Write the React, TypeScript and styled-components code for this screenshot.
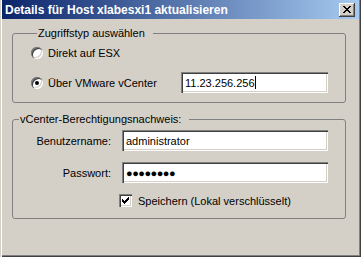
import React from 'react'
import styled, { createGlobalStyle } from 'styled-components'

const Global = createGlobalStyle`
    html, body {
        margin: 0;
        padding: 0;
        background: #d4d0c8;
    }
    * {
        box-sizing: border-box;
    }
`

const face = '#d4d0c8'
const shadow = '#808080'
const darkShadow = '#404040'
const font = `'Liberation Sans', Arial, sans-serif`

const Window = styled.div`
    width: 361px;
    height: 257px;
    background: ${face};
    font-family: ${font};
    font-size: 11px;
    color: #000;
    display: flex;
    flex-direction: column;
    box-shadow: inset 1px 0 ${face}, inset 2px 0 #fff, inset -1px -1px ${darkShadow}, inset -2px -2px ${shadow};
    padding: 0 2px 2px 2px;
`

const TitleBar = styled.div`
    height: 19px;
    display: flex;
    align-items: center;
    justify-content: space-between;
    padding: 0 4px 0 3px;
    background: linear-gradient(to right, #0a246a, #a6caf0);
`

const TitleText = styled.span`
    color: #fff;
    font-weight: bold;
    font-size: 12px;
    white-space: nowrap;
`

const CloseButton = styled.div`
    width: 16px;
    height: 14px;
    background: ${face};
    display: flex;
    align-items: center;
    justify-content: center;
    box-shadow: inset -1px -1px ${darkShadow}, inset 1px 1px #fff, inset -2px -2px ${shadow};
`

const Body = styled.div`
    display: flex;
    flex-direction: column;
    gap: 10px;
    padding: 8px 13px 0 10px;
`

const Group = styled.fieldset<{ $top: number; $bottom: number; $left: number }>`
    margin: 0;
    border: 1px solid ${shadow};
    border-radius: 3px;
    padding: ${p => p.$top}px 0 ${p => p.$bottom}px ${p => p.$left}px;
    min-width: 0;
`

const Legend = styled.legend`
    padding: 0 8px 0 1px;
    margin-left: 6px;
    line-height: 13px;
    font-size: 11px;
`

const RadioList = styled.div`
    display: flex;
    flex-direction: column;
    gap: 11px;
`

const RadioRow = styled.div`
    display: flex;
    align-items: center;
    height: 16px;
`

const RadioRowWithField = styled(RadioRow)`
    height: 21px;
`

const RadioCircle = styled.span<{ $checked?: boolean }>`
    position: relative;
    width: 12px;
    height: 12px;
    border-radius: 50%;
    background: #fff;
    flex: none;
    box-shadow: inset 1px 1px ${shadow}, inset 2px 2px ${darkShadow}, inset -1px -1px #fff, inset -2px -2px ${face};
    margin-right: 5px;
    &::after {
        content: '';
        display: ${p => (p.$checked ? 'block' : 'none')};
        position: absolute;
        left: 4px;
        top: 4px;
        width: 4px;
        height: 4px;
        border-radius: 50%;
        background: #000;
    }
`

const RadioLabel = styled.span`
    white-space: nowrap;
`

const Field = styled.div<{ $width: number }>`
    width: ${p => p.$width}px;
    height: 21px;
    background: #fff;
    display: flex;
    align-items: center;
    padding: 0 4px;
    box-shadow: inset 1px 1px ${shadow}, inset 2px 2px ${darkShadow}, inset -1px -1px #fff, inset -2px -2px ${face};
    white-space: nowrap;
    overflow: hidden;
`

const IpField = styled(Field)`
    margin-left: auto;
    margin-right: 17px;
`

const Caret = styled.span`
    display: inline-block;
    width: 1px;
    height: 13px;
    background: #000;
`

const Dots = styled.span`
    font-size: 11px;
    letter-spacing: -0.5px;
`

const Credentials = styled.div`
    display: grid;
    grid-template-columns: 98px 206px;
    column-gap: 11px;
    row-gap: 11px;
    align-items: center;
`

const FieldLabel = styled.span`
    text-align: right;
`

const CheckRow = styled.div`
    grid-column: 2;
    display: flex;
    align-items: center;
    height: 13px;
    margin-left: -3px;
`

const CheckBox = styled.span`
    width: 13px;
    height: 13px;
    background: #fff;
    flex: none;
    display: flex;
    align-items: center;
    justify-content: center;
    box-shadow: inset 1px 1px ${shadow}, inset 2px 2px ${darkShadow}, inset -1px -1px #fff, inset -2px -2px ${face};
    margin-right: 6px;
`

export default function App() {
    return (
        <>
            <Global />
            <Window>
                <TitleBar>
                    <TitleText>Details für Host xlabesxi1 aktualisieren</TitleText>
                    <CloseButton>
                        <svg width="8" height="7" viewBox="0 0 8 7" shapeRendering="crispEdges">
                            <path d="M0 0h2v1h-2zM6 0h2v1h-2zM1 1h2v1h-2zM5 1h2v1h-2zM2 2h4v1h-4zM3 3h2v1h-2zM2 4h4v1h-4zM1 5h2v1h-2zM5 5h2v1h-2zM0 6h2v1h-2zM6 6h2v1h-2z" fill="#000" />
                        </svg>
                    </CloseButton>
                </TitleBar>
                <Body>
                    <Group $top={5} $bottom={9} $left={18}>
                        <Legend>Zugriffstyp auswählen</Legend>
                        <RadioList>
                            <RadioRow>
                                <RadioCircle />
                                <RadioLabel>Direkt auf ESX</RadioLabel>
                            </RadioRow>
                            <RadioRowWithField>
                                <RadioCircle $checked />
                                <RadioLabel>Über VMware vCenter</RadioLabel>
                                <IpField $width={147}>
                                    11.23.256.256
                                    <Caret />
                                </IpField>
                            </RadioRowWithField>
                        </RadioList>
                    </Group>
                    <Group $top={4} $bottom={11} $left={0}>
                        <Legend>vCenter-Berechtigungsnachweis:</Legend>
                        <Credentials>
                            <FieldLabel>Benutzername:</FieldLabel>
                            <Field $width={206}>administrator</Field>
                            <FieldLabel>Passwort:</FieldLabel>
                            <Field $width={206}>
                                <Dots>●●●●●●●●</Dots>
                            </Field>
                            <CheckRow>
                                <CheckBox>
                                    <svg width="7" height="7" viewBox="0 0 7 7" shapeRendering="crispEdges">
                                        <path d="M6 0h1v3h-1zM5 1h1v3h-1zM4 2h1v3h-1zM3 3h1v3h-1zM2 4h1v3h-1zM1 3h1v3h-1zM0 2h1v3h-1z" fill="#000" />
                                    </svg>
                                </CheckBox>
                                <span>Speichern (Lokal verschlüsselt)</span>
                            </CheckRow>
                        </Credentials>
                    </Group>
                </Body>
            </Window>
        </>
    )
}
